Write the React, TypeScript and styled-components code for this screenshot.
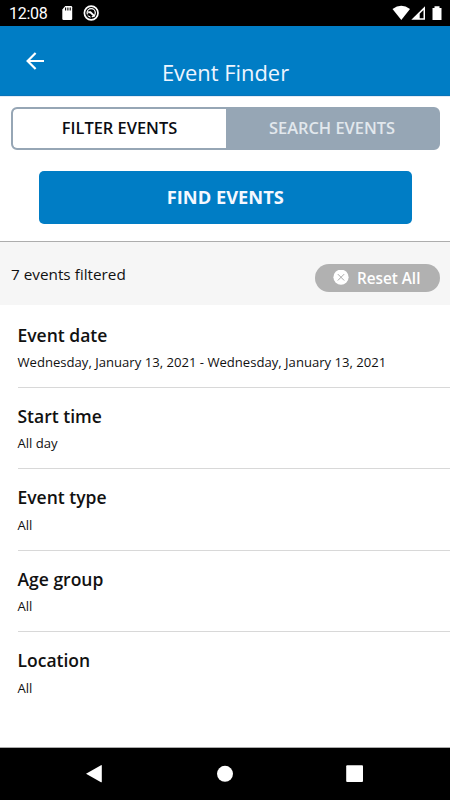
import React from "react";
import styled, { createGlobalStyle } from "styled-components";

const Global = createGlobalStyle`
  *, *::before, *::after { box-sizing: border-box; }
  body { margin: 0; background: #fff; }
  button { font: inherit; border: 0; padding: 0; margin: 0; background: none; }
  h1, h2, p { margin: 0; }
`;

const Screen = styled.div`
  width: 450px;
  height: 800px;
  display: flex;
  flex-direction: column;
  overflow: hidden;
  background: #fff;
  color: #111;
  font-family: "Open Sans", "Noto Sans", sans-serif;
`;

const StatusBar = styled.div`
  height: 26px;
  flex: none;
  display: flex;
  justify-content: space-between;
  background: #000;
  color: #fff;
`;

const Clock = styled.span`
  width: 51px;
  padding-left: 9px;
  font: 400 16px/27px Roboto, sans-serif;
  letter-spacing: -0.3px;
  white-space: nowrap;
`;

const StatusGroup = styled.div`
  display: flex;
`;

const Header = styled.header`
  height: 70px;
  flex: none;
  display: grid;
  grid-template-columns: 70px 1fr 70px;
  background: #007dc5;
  border-bottom: 1px solid #0874b9;
  color: #fff;
`;

const BackButton = styled.button`
  height: 70px;
  display: flex;
  align-items: center;
  justify-content: center;
`;

const Title = styled.h1`
  padding: 32px 0 0 1px;
  font-size: 21.9px;
  font-weight: 400;
  line-height: 30px;
  text-align: center;
  color: #eef5ff;
`;

const Actions = styled.section`
  height: 146px;
  flex: none;
  padding: 10px 10px 0 11px;
  border-top: 1px solid #e3ebf4;
  border-bottom: 1px solid #adadad;
`;

const Segments = styled.div`
  height: 43px;
  display: flex;
  border: 2px solid #96a6b5;
  border-radius: 6px;
  background: #96a6b5;
  overflow: hidden;
`;

const Segment = styled.button<{ $active?: boolean }>`
  width: ${(p) => (p.$active ? "213px" : "212px")};
  padding-bottom: 2px;
  border-radius: ${(p) => (p.$active ? "4px 0 0 4px" : "0")};
  background: ${(p) => (p.$active ? "#fff" : "#96a6b5")};
  color: ${(p) => (p.$active ? "#0b0d14" : "#e2e8ed")};
  font-size: 16.4px;
  font-weight: 600;
  line-height: 37px;
`;

const FindButton = styled.button`
  display: block;
  width: 373.5px;
  height: 53px;
  margin: 21px 0 0 27.5px;
  padding-bottom: 2px;
  border-radius: 5px;
  background: #007dc5;
  color: #f5f8ff;
  font-size: 18.3px;
  font-weight: 700;
  line-height: 50px;
`;

const Summary = styled.section`
  height: 63px;
  flex: none;
  display: flex;
  justify-content: space-between;
  padding: 0 10px 0 11px;
  background: #f6f6f6;
`;

const Count = styled.p`
  padding-top: 21px;
  font-size: 15.3px;
  line-height: 22px;
`;

const ResetButton = styled.button`
  width: 125.5px;
  height: 28px;
  margin-top: 22px;
  display: flex;
  align-items: center;
  padding-left: 18.4px;
  gap: 8px;
  border-radius: 14px;
  background: #b1b1b1;
  color: #fff;
  font-size: 15.3px;
  font-weight: 600;
  line-height: 28px;
  white-space: nowrap;
`;

const Filters = styled.main`
  flex: 1;
  min-height: 0;
  padding-left: 17.5px;
`;

const FilterRow = styled.section`
  height: 81.4px;
  padding-top: 16.1px;
  border-bottom: 1px solid #d8d8d8;
  &:first-child { height: 82.9px; padding-top: 18px; }
  &:last-child { border-bottom: 0; }
`;

const FilterName = styled.h2`
  font-size: 17.5px;
  font-weight: 600;
  line-height: 24px;
`;

const FilterValue = styled.p`
  padding-top: 6.4px;
  font-size: 13.1px;
  line-height: 18px;
`;

const NavBar = styled.nav`
  height: 53px;
  flex: none;
  display: flex;
  justify-content: space-between;
  padding: 0 80px;
  border-top: 1px solid #aaa;
  background: #000;
`;

const filters = [
  { name: "Event date", value: "Wednesday, January 13, 2021 - Wednesday, January 13, 2021" },
  { name: "Start time", value: "All day" },
  { name: "Event type", value: "All" },
  { name: "Age group", value: "All" },
  { name: "Location", value: "All" },
];

const NotificationIcons = () => (
  <svg width="48" height="26" viewBox="0 0 48 26" fill="#fff">
    <path d="M14.3 6H20q1.2 0 1.2 1.2v11.6q0 1.2-1.2 1.2h-7.5q-1.2 0-1.2-1.2V9.5z" />
    <path d="M14.6 7.6v2.8M16.9 7.6v2.8M19.2 7.6v2.8" stroke="#000" strokeWidth="1.1" />
    <circle cx="40.2" cy="13" r="6.8" fill="none" stroke="#fff" strokeWidth="1.7" />
    <circle cx="40.2" cy="12.8" r="4.1" fill="none" stroke="#fff" strokeWidth="1.3" />
    <path d="M37.2 12.2h2.2l4.3 4.2" fill="none" stroke="#fff" strokeWidth="1.9" />
    <path d="M35.8 15l3-.2 2.2 3" fill="none" stroke="#000" strokeWidth="1.1" />
  </svg>
);

const SignalIcons = () => (
  <svg width="60" height="26" viewBox="390 0 60 26" fill="#fff">
    <path d="M392.5 9.1Q401.3 2.6 410 9.1L401.3 20z" />
    <path d="M411.3 19.8L425 6.2v13.6z" />
    <path d="M419.7 13.8l3.8-3.8v8.3h-3.8z" fill="#000" />
    <path d="M432.5 8h2V6.2h5V8h2v11.9h-9z" />
  </svg>
);

const BackIcon = () => (
  <svg width="22" height="22" viewBox="0 0 22 22" fill="none" stroke="#fff" strokeWidth="2.2">
    <path d="M11.6 2.9L3.6 11l8 8.1M3.8 11H20" />
  </svg>
);

const ClearIcon = () => (
  <svg width="16" height="16" viewBox="0 0 16 16">
    <circle cx="8" cy="7.2" r="7.6" fill="#fff" />
    <path d="M4.8 4.1l6.4 6.4M11.2 4.1l-6.4 6.4" stroke="#a9a9a9" strokeWidth="1" />
  </svg>
);

export default function App() {
  return (
    <>
      <Global />
      <Screen>
        <StatusBar>
          <StatusGroup>
            <Clock>12:08</Clock>
            <NotificationIcons />
          </StatusGroup>
          <SignalIcons />
        </StatusBar>
        <Header>
          <BackButton aria-label="Back"><BackIcon /></BackButton>
          <Title>Event Finder</Title>
        </Header>
        <Actions>
          <Segments>
            <Segment $active>FILTER EVENTS</Segment>
            <Segment>SEARCH EVENTS</Segment>
          </Segments>
          <FindButton>FIND EVENTS</FindButton>
        </Actions>
        <Summary>
          <Count>7 events filtered</Count>
          <ResetButton><ClearIcon />Reset All</ResetButton>
        </Summary>
        <Filters>
          {filters.map((f) => (
            <FilterRow key={f.name}>
              <FilterName>{f.name}</FilterName>
              <FilterValue>{f.value}</FilterValue>
            </FilterRow>
          ))}
        </Filters>
        <NavBar>
          <svg width="290" height="52" viewBox="80 0 290 52" fill="#fff">
            <path d="M86 25.8l15-8.6q.8-.4.8.5v16q0 1-.8.5z" />
            <circle cx="225" cy="25.8" r="8" />
            <rect x="346.2" y="17.3" width="16.8" height="16.8" rx="1" />
          </svg>
        </NavBar>
      </Screen>
    </>
  );
}
